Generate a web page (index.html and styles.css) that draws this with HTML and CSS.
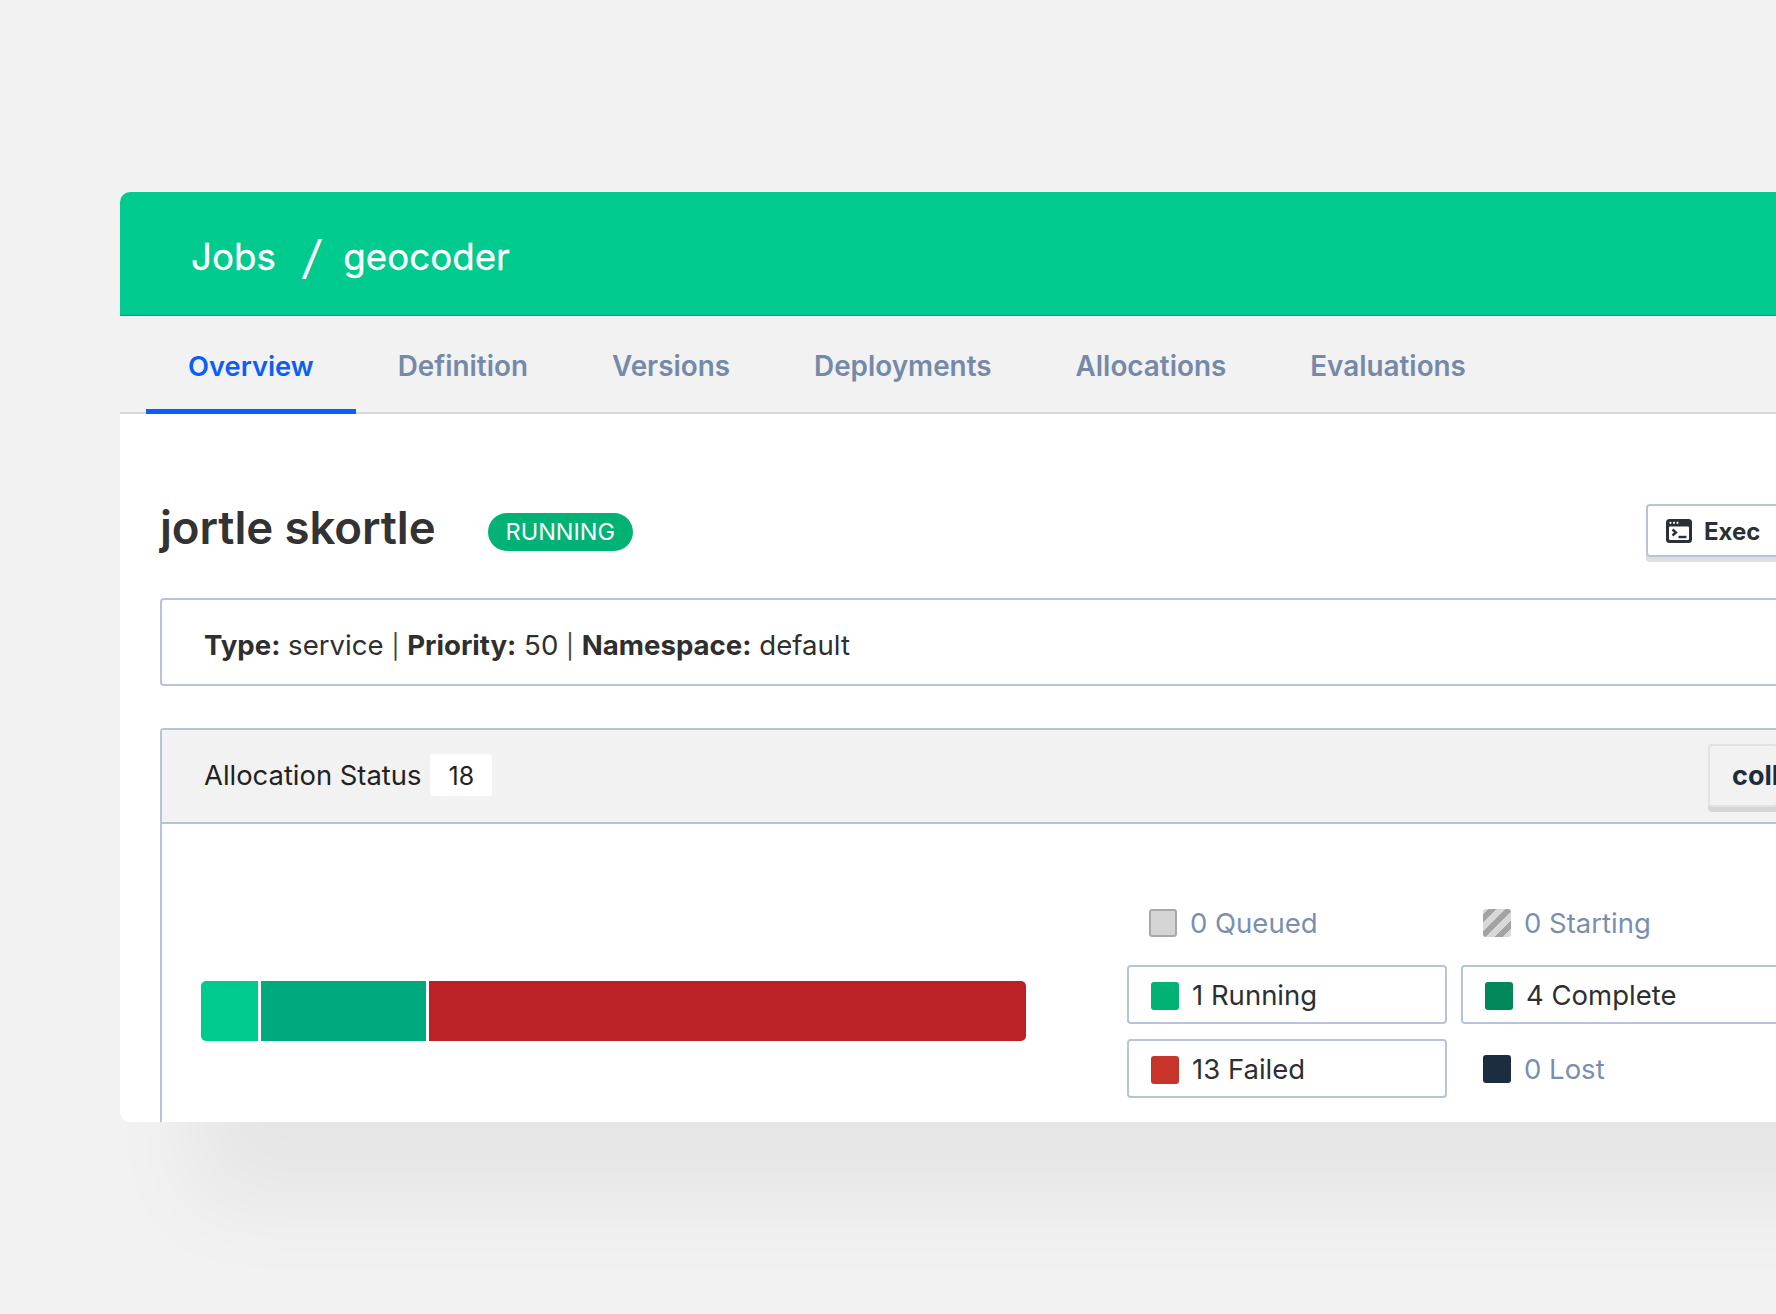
FILE: index.html
```html
<!DOCTYPE html>
<html lang="en">

<head>
    <meta charset="UTF-8">
    <title>geocoder - Jobs</title>
    <link rel="stylesheet" href="styles.css">
</head>

<body>
    <div class="vindu">
        <div class="topp">
            <span>Jobs</span>
            <span class="skille">/</span>
            <span>geocoder</span>
        </div>

        <div class="faner">
            <a class="fane aktiv">Overview</a>
            <a class="fane">Definition</a>
            <a class="fane">Versions</a>
            <a class="fane">Deployments</a>
            <a class="fane">Allocations</a>
            <a class="fane">Evaluations</a>
        </div>

        <div class="innhold">
            <div class="tittelrad">
                <h1>jortle skortle</h1>
                <span class="merke">RUNNING</span>
                <button class="exec">
                    <svg width="26" height="24" viewBox="0 0 26 24">
                        <rect width="26" height="24" rx="3.5" fill="#2b3038"/>
                        <rect x="3" y="7.5" width="20" height="13.5" rx="1" fill="#fff"/>
                        <circle cx="4.5" cy="3.8" r="1.1" fill="#fff"/>
                        <circle cx="8" cy="3.8" r="1.1" fill="#fff"/>
                        <circle cx="11.5" cy="3.8" r="1.1" fill="#fff"/>
                        <path d="M6.5 10.5l3.4 3-3.4 3" fill="none" stroke="#2b3038" stroke-width="2.4"/>
                        <path d="M12.5 18h8" fill="none" stroke="#2b3038" stroke-width="2.4"/>
                    </svg>
                    <span class="exec-tekst">Exec</span>
                </button>
            </div>

            <div class="infoboks">
                <b>Type:</b> service <span class="strek">|</span> <b>Priority:</b> 50 <span class="strek">|</span> <b>Namespace:</b> default
            </div>

            <div class="statusboks">
                <div class="statushode">
                    <span class="statustittel">Allocation Status</span>
                    <span class="antall">18</span>
                    <button class="kollaps">collapse</button>
                </div>
                <div class="statuskropp">
                    <div class="stolpe">
                        <div class="del del-running"></div>
                        <div class="del del-complete"></div>
                        <div class="del del-failed"></div>
                    </div>
                    <div class="forklaring">
                        <div class="post tom"><i class="rute queued"></i>0 Queued</div>
                        <div class="post tom"><i class="rute starting"></i>0 Starting</div>
                        <div class="post valgt"><i class="rute running"></i>1 Running</div>
                        <div class="post valgt"><i class="rute complete"></i>4 Complete</div>
                        <div class="post valgt"><i class="rute failed"></i>13 Failed</div>
                        <div class="post tapt"><i class="rute lost"></i>0 Lost</div>
                    </div>
                </div>
            </div>
        </div>
    </div>
</body>

</html>
```

FILE: styles.css
```css
html, body {
    margin: 0;
    height: 100%;
    overflow: hidden;
    background-color: #f2f2f2;
}

body {
    font-family: Inter, "Liberation Sans", sans-serif;
    color: #2f2f2f;
}

.vindu {
    width: 1900px;
    height: 930px;
    margin: 192px 0 0 120px;
    background-color: white;
    border-radius: 10px 0 0 10px;
    box-shadow: 0 153px 85px -70px rgba(0, 0, 0, 0.05);
    overflow: hidden;
}

.topp {
    display: flex;
    align-items: center;
    gap: 23px;
    padding: 6px 0 0 71px;
    box-sizing: border-box;
    height: 124px;
    background-color: #00ca8e;
    border-bottom: 1px solid #00a06f;
    color: white;
    font-size: 36.7px;
    -webkit-text-stroke: 0.3px white;
}

.skille {
    margin-left: 5px;
    font-size: 46px;
    font-weight: 400;
    line-height: 40px;
    transform: skewX(-8deg);
    -webkit-text-stroke: 0;
}

.faner {
    display: flex;
    height: 98px;
    padding-left: 26px;
    background-color: #f2f2f2;
    border-bottom: 2px solid #d8d8d8;
    box-sizing: border-box;
}

.fane {
    display: flex;
    align-items: center;
    height: 98px;
    padding: 7px 42px 0;
    box-sizing: border-box;
    border-bottom: 5px solid transparent;
    color: #748aa8;
    font-size: 27.85px;
    font-weight: 600;
}

.aktiv {
    color: #0a5ffb;
    border-bottom-color: #0a5ffb;
    font-size: 27.3px;
}

.innhold {
    padding: 90px 240px 0 40px;
}

.tittelrad {
    display: flex;
    align-items: center;
    height: 58px;
    margin-bottom: 36px;
}

h1 {
    margin: 0 52px 12px 0;
    color: #333;
    font-size: 45.6px;
    font-weight: 600;
    letter-spacing: -0.1px;
}

.merke {
    margin-bottom: 2px;
    padding: 5px 18px;
    border-radius: 20px;
    background-color: #00b374;
    color: white;
    font-size: 23.5px;
    line-height: 28px;
}

button {
    font-family: inherit;
}

.exec {
    display: flex;
    align-items: center;
    gap: 12px;
    width: 134px;
    height: 53px;
    margin-left: auto;
    align-self: flex-start;
    padding: 0 0 0 18px;
    background-color: white;
    border: 2px solid #b7c4d8;
    border-radius: 4px;
    box-shadow: 0 5px 0 #dedede;
    color: #2b3038;
    font-size: 24px;
    font-weight: 700;
}

.exec-tekst {
    padding-top: 2px;
}

.infoboks {
    height: 88px;
    box-sizing: border-box;
    display: block;
    padding-left: 42px;
    margin-bottom: 42px;
    border: 2px solid #b7c4d8;
    border-radius: 4px;
    font-size: 27.6px;
    line-height: 90px;
}

.strek {
    font-size: 24px;
    color: #444;
}

.statusboks {
    border: 2px solid #b7c4d8;
    border-radius: 4px;
    height: 500px;
}

.statushode {
    display: flex;
    align-items: center;
    height: 92px;
    padding: 0 0 0 42px;
    box-sizing: content-box;
    background-color: #f2f2f2;
    border-bottom: 2px solid #b7c4d8;
    font-size: 27.4px;
    color: #222;
}

.statustittel,
.antall {
    margin-bottom: 2px;
}

.antall {
    margin-left: 9px;
    padding: 2px 18px 0;
    background-color: white;
    border-radius: 3px;
    font-size: 25px;
    line-height: 40px;
}

.kollaps {
    width: 70px;
    height: 63px;
    margin: 0 0 2px auto;
    padding: 0 0 0 22px;
    background-color: #f2f2f2;
    border: 2px solid #e2e2e2;
    border-radius: 4px;
    box-shadow: 0 5px 0 #d6d6d6;
    color: #1c2d3f;
    font-size: 27px;
    font-weight: 700;
    text-align: left;
    white-space: nowrap;
}

.statuskropp {
    display: flex;
    align-items: flex-start;
    padding: 67px 0 0 39px;
}

.stolpe {
    display: flex;
    gap: 3px;
    width: 825px;
    height: 60px;
    margin: 90px 101px 0 0;
    border-radius: 5px;
    overflow: hidden;
    flex: none;
}

.del-running {
    width: 57px;
    background-color: #00ca8e;
}

.del-complete {
    width: 165px;
    background-color: #00a97e;
}

.del-failed {
    width: 597px;
    background-color: #ba2225;
}

.forklaring {
    display: grid;
    grid-template-columns: 320px 320px;
    grid-auto-rows: 59px;
    gap: 15px 14px;
    flex: none;
    font-size: 27.5px;
}

.post {
    display: flex;
    align-items: center;
    gap: 13px;
    box-sizing: border-box;
    padding-left: 22px;
}

.tom,
.tapt {
    color: #7a8fae;
}

.tom {
    padding-top: 5px;
}

.valgt {
    padding-left: 22px;
    border: 2px solid #b7c4d8;
    border-radius: 4px;
}

.valgt .rute {
    margin-top: 2px;
}

.rute {
    width: 28px;
    height: 28px;
    box-sizing: border-box;
    border-radius: 3px;
    flex: none;
}

.queued {
    background-color: #d5d5d5;
    border: 2px solid #a8a8a8;
}

.starting {
    background: repeating-linear-gradient(-45deg, #d8d8d8 0, #d8d8d8 6px, #a3a3a3 6px, #a3a3a3 12px);
}

.running {
    background-color: #00b374;
}

.complete {
    background-color: #00875a;
}

.failed {
    background-color: #c73429;
}

.lost {
    background-color: #1c2d3f;
}
```
